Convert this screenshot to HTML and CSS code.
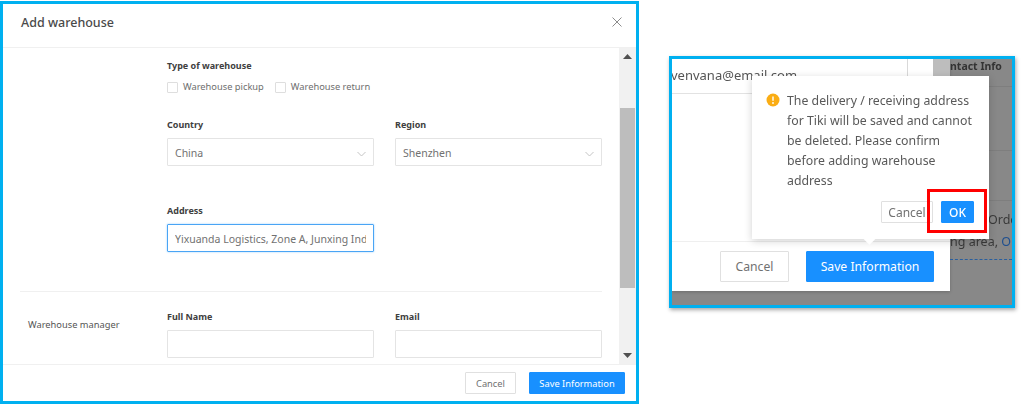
FILE: index.html
```html
<!DOCTYPE html>
<html lang="en">
<head>
<meta charset="utf-8">
<title>Add warehouse</title>
<link rel="stylesheet" href="styles.css">
</head>
<body>
<div class="page">
  <section class="dialog">
    <header class="dialog-head">
      <h1 class="dialog-title">Add warehouse</h1>
      <svg class="close" width="10" height="10" viewBox="0 0 10 10"><path d="M.5.5l9 9M9.5.5l-9 9" stroke="#8c8c8c" stroke-width="1" fill="none"/></svg>
    </header>
    <div class="dialog-main">
      <div class="form">
        <div class="form-block block-type">
          <div class="label">Type of warehouse</div>
          <div class="checks">
            <label class="check"><span class="box"></span>Warehouse pickup</label>
            <label class="check"><span class="box"></span>Warehouse return</label>
          </div>
        </div>
        <div class="pair block-country">
          <div class="field">
            <div class="label">Country</div>
            <div class="control">China<svg class="chev" width="9" height="6" viewBox="0 0 9 6"><path d="M.5 1l4 4 4-4" stroke="#c4c4c4" fill="none"/></svg></div>
          </div>
          <div class="field">
            <div class="label">Region</div>
            <div class="control">Shenzhen<svg class="chev" width="9" height="6" viewBox="0 0 9 6"><path d="M.5 1l4 4 4-4" stroke="#c4c4c4" fill="none"/></svg></div>
          </div>
        </div>
        <div class="pair block-address">
          <div class="field">
            <div class="label">Address</div>
            <div class="control focus"><span class="clip">Yixuanda Logistics, Zone A, Junxing Industrial Park</span></div>
          </div>
        </div>
        <div class="divider"></div>
        <div class="manager">
          <div class="manager-label">Warehouse manager</div>
          <div class="pair">
            <div class="field">
              <div class="label">Full Name</div>
              <div class="control"></div>
            </div>
            <div class="field">
              <div class="label">Email</div>
              <div class="control"></div>
            </div>
          </div>
        </div>
      </div>
      <div class="scrollbar">
        <svg width="9" height="5" viewBox="0 0 9 5"><path d="M4.5 0L9 5H0z" fill="#505050"/></svg>
        <div class="track"><div class="thumb"></div></div>
        <svg width="9" height="5" viewBox="0 0 9 5"><path d="M0 0h9L4.500 5z" fill="#505050"/></svg>
      </div>
    </div>
    <footer class="dialog-foot">
      <button class="btn btn-default">Cancel</button>
      <button class="btn btn-primary">Save Information</button>
    </footer>
    <div class="behind-strip"><span>Warehouse information</span></div>
  </section>

  <section class="shot">
    <div class="shot-modal">
      <div class="shot-top">
        <span class="shot-email">venvana@email.com</span>
        <span class="shot-vline"></span>
        <span class="shot-thumb"></span>
      </div>
      <div class="shot-space"></div>
      <div class="shot-foot">
        <button class="btn btn-default big">Cancel</button>
        <button class="btn btn-primary big">Save Information</button>
      </div>
    </div>
    <div class="shot-back">
      <div class="back-head">ntact Info</div>
      <div class="back-rule rule-a"></div>
      <div class="back-rule rule-b"></div>
      <div class="back-line"><span>Orde</span></div>
      <div class="back-line two">ng area, <a class="back-link">Or</a></div>
      <div class="back-dash"></div>
    </div>
    <div class="pop">
      <div class="pop-msg">
        <svg class="warn" width="14" height="14" viewBox="0 0 14 14"><circle cx="7" cy="7" r="6.500" fill="#faad14"/><path d="M7 3.500v4.200" stroke="#fff" stroke-width="1.400"/><circle cx="7" cy="10" r=".9" fill="#fff"/></svg>
        <p class="pop-text">The delivery / receiving address for Tiki will be saved and cannot be deleted. Please confirm before adding warehouse address</p>
      </div>
      <div class="pop-actions">
        <button class="btn btn-default small">Cancel</button>
        <button class="btn btn-primary small">OK</button>
      </div>
      <span class="pop-arrow"></span>
    </div>
    <span class="red-box"></span>
  </section>
</div>
</body>
</html>
```

FILE: styles.css
```css
* { box-sizing: border-box; }
html, body { margin: 0; height: 405px; overflow: hidden; background: #fff; }
body { font-family: "Noto Sans", "Open Sans", sans-serif; color: #595959; }
.page { display: flex; align-items: flex-start; gap: 30px; padding-top: 1px; filter: blur(.35px); }

.dialog {
  position: relative; width: 639px; height: 403px; flex: none;
  border: 3px solid #00b0f0;
  display: flex; flex-direction: column; overflow: hidden; background: #fff;
}
.dialog-head {
  height: 44px; flex: none; display: flex; align-items: center; justify-content: space-between;
  padding: 0 14px 7px 18px; border-bottom: 1px solid #f0f0f0;
}
.dialog-title { margin: 0; font-size: 12.500px; font-weight: 500; color: #4a4a4a; }
.dialog-main { flex: 1; min-height: 0; display: flex; }
.form { flex: 1; min-width: 0; padding: 11px 17px 0 17px; overflow: hidden; }
.form-block, .pair { margin-left: 147px; }
.label { font-size: 9px; font-weight: 700; line-height: 13px; color: #404040; }
.checks { display: flex; gap: 11px; margin-top: 9px; }
.check { display: flex; align-items: center; gap: 5px; font-size: 9.300px; line-height: 12px; color: #6e6e6e; }
.box { width: 11px; height: 11px; border: 1px solid #dedede; border-radius: 1px; }
.pair { display: grid; grid-template-columns: 207px 207px; column-gap: 21px; }
.block-country { margin-top: 25px; }
.block-address { margin-top: 38px; }
.field .label { margin-bottom: 7px; }
.control {
  position: relative; height: 28px; border: 1px solid #e4e4e4; border-radius: 1px;
  padding: 1px 7px 0; display: flex; align-items: center; font-size: 10.500px; color: #717171;
}
.control.focus { border-color: #4aa5f5; box-shadow: 0 0 2px rgba(24,144,255,.45); }
.clip { white-space: nowrap; overflow: hidden; }
.chev { position: absolute; right: 7px; top: 12px; }
.divider { height: 1px; background: #f0f0f0; margin-top: 39px; }
.manager { position: relative; margin-top: 18px; }
.manager-label { position: absolute; left: 8px; top: 8px; font-size: 9.300px; line-height: 13px; color: #555; }
.manager .pair { margin-left: 147px; }

.scrollbar {
  width: 17px; flex: none; background: #f1f1f1; display: flex; flex-direction: column;
  align-items: center; justify-content: space-between; padding: 6px 0 6px;
}
.track { flex: 1; width: 100%; padding: 49px 1px 65px; }
.thumb { height: 100%; width: 15px; background: #bdbdbd; }

.dialog-foot {
  flex: none; height: 37px; border-top: 1px solid #f0f0f0; padding-right: 11px;
  display: flex; align-items: center; justify-content: flex-end; gap: 13px;
}
.btn { font-family: inherit; border-radius: 1px; display: inline-flex; align-items: center; justify-content: center; padding: 0; }
.btn-default { background: #fff; border: 1px solid #e0e0e0; color: #717171; }
.btn-primary { background: #1890ff; border: 1px solid #1890ff; color: #fff; }
.dialog-foot .btn { height: 22px; font-size: 9.300px; }
.dialog-foot .btn-default { width: 51px; }
.dialog-foot .btn-primary { width: 96px; }
.behind-strip { position: absolute; left: 130px; bottom: -11px; font-size: 9px; font-weight: 700; line-height: 12px; color: #444; }

.shot {
  position: relative; margin-top: 55px; width: 346px; height: 252px; flex: none;
  border: 3px solid #00b0f0; background: #888; display: flex; overflow: hidden;
  box-shadow: 1px 2px 4px rgba(0,0,0,.35);
}
.shot-modal {
  width: 278px; height: 232px; background: #fff; flex: none; display: flex; flex-direction: column;
  box-shadow: 0 1px 3px rgba(0,0,0,.2);
}
.shot-top { position: relative; height: 35px; flex: none; border-bottom: 1px solid #e2e2e2; }
.shot-email { position: absolute; left: -1px; top: 7px; font-size: 13px; line-height: 18px; color: #555; }
.shot-vline { position: absolute; left: 235px; top: 0; bottom: 0; width: 1px; background: #d9d9d9; }
.shot-thumb { position: absolute; left: 261px; top: 0; width: 17px; height: 17px; background: #bdbdbd; }
.shot-space { flex: 1; }
.shot-foot {
  height: 50px; flex: none; border-top: 1px solid #efefef; display: flex; align-items: center; justify-content: flex-end;
  gap: 17px; padding-right: 16px;
}
.btn.big { height: 31px; font-size: 12.200px; }
.btn-default.big { width: 69px; }
.btn-primary.big { width: 128px; }

.shot-back { position: relative; flex: 1; color: #3a3a3a; font-size: 12.500px; }
.back-head { font-weight: 700; font-size: 10.500px; line-height: 14px; color: #333; }
.back-rule { position: absolute; left: 0; right: 0; height: 1px; background: #7e7e7e; }
.rule-a { top: 27px; }
.rule-b { top: 91px; }
.back-line { position: absolute; left: 0; right: 0; top: 141px; line-height: 38px; border-top: 1px solid #7e7e7e; text-indent: 38px; white-space: nowrap; }
.back-line.two { top: 173px; line-height: 20px; border: 0; text-indent: 0; }
.back-link { color: #1f4f8f; }
.back-dash { position: absolute; left: 0; right: 0; top: 200px; border-top: 1px dashed #2a5f9e; }

.pop {
  position: absolute; left: 80px; top: 17px; width: 237px; height: 163px; background: #fff;
  padding: 15px 14px 0 14px; box-shadow: 0 2px 8px rgba(0,0,0,.18);
}
.pop-msg { display: flex; gap: 7px; }
.warn { flex: none; margin-top: 2px; }
.pop-text { margin: 0; font-size: 12.300px; line-height: 20px; color: #595959; width: 194px; }
.pop-actions { position: absolute; right: 15px; top: 125px; display: flex; gap: 8px; }
.btn.small { height: 22px; font-size: 12px; }
.btn-default.small { width: 52px; }
.btn-primary.small { width: 33px; font-weight: 500; }
.pop-arrow {
  position: absolute; left: 113px; bottom: -4px; width: 9px; height: 9px; background: #fff; transform: rotate(45deg);
}
.red-box { position: absolute; left: 255px; top: 130px; width: 60px; height: 44px; border: 3px solid #f00; }
```
